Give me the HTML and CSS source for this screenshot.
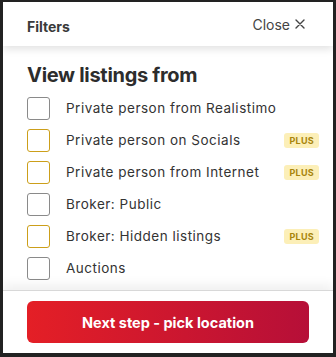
FILE: index.html
```html
<!DOCTYPE html>
<html lang="en">
<head>
    <meta charset="UTF-8">
    <meta name="viewport" content="width=device-width, initial-scale=1.0">
    <title>Filters</title>
    <link rel="stylesheet" href="styles.css">
</head>
<body>
    <div class="modal">
        <div class="modal-header">
            <div class="modal-title">Filters</div>
            <div class="close-btn">Close
                <svg class="close-x" width="10" height="10" viewBox="0 0 10 10">
                    <path d="M1 1 L9 9 M9 1 L1 9" stroke="#444" stroke-width="1.4" fill="none" stroke-linecap="round"/>
                </svg>
            </div>
        </div>

        <div class="modal-body">
            <h2>View listings from</h2>
            <label class="option">
                <span class="check"></span>
                <span class="option-label">Private person from Realistimo</span>
            </label>
            <label class="option">
                <span class="check check-plus"></span>
                <span class="option-label">Private person on Socials</span>
                <span class="badge">PLUS</span>
            </label>
            <label class="option">
                <span class="check check-plus"></span>
                <span class="option-label">Private person from Internet</span>
                <span class="badge">PLUS</span>
            </label>
            <label class="option">
                <span class="check"></span>
                <span class="option-label">Broker: Public</span>
            </label>
            <label class="option">
                <span class="check check-plus"></span>
                <span class="option-label">Broker: Hidden listings</span>
                <span class="badge">PLUS</span>
            </label>
            <label class="option">
                <span class="check"></span>
                <span class="option-label">Auctions</span>
            </label>
        </div>

        <div class="modal-footer">
            <button class="next-btn">Next step - pick location</button>
        </div>
    </div>
</body>
</html>
```

FILE: styles.css
```css
html, body {
    margin: 0;
    padding: 0;
    height: 100%;
}

body {
    background: #222222;
    font-family: 'Inter', 'Open Sans', sans-serif;
    color: #333;
    padding: 2px 3px 4px 3px;
    box-sizing: border-box;
}

.modal {
    background: #ffffff;
    height: 100%;
    display: flex;
    flex-direction: column;
    overflow: hidden;
}

.modal-header {
    height: 44px;
    flex-shrink: 0;
    display: flex;
    justify-content: space-between;
    align-items: center;
    padding: 0 28px 0 24px;
    box-shadow: 0 3px 8px rgba(0, 0, 0, 0.12);
    position: relative;
    z-index: 1;
}

.modal-title {
    font-size: 14px;
    font-weight: 700;
    color: #3a3a3a;
    padding-top: 4px;
}

.close-btn {
    font-size: 14px;
    color: #444;
    display: flex;
    align-items: center;
    gap: 5px;
}

.modal-body {
    flex: 1;
    padding: 17px 14px 0 24px;
    overflow: hidden;
    position: relative;
}

h2 {
    margin: 0 0 5px 0;
    font-size: 20px;
    font-weight: 700;
    color: #2d2d2d;
    letter-spacing: -0.3px;
}

.option {
    display: flex;
    align-items: center;
    height: 32px;
}

.check {
    width: 21px;
    height: 21px;
    border: 1.5px solid #8a8a8a;
    border-radius: 3px;
    flex-shrink: 0;
}

.check-plus {
    border-color: #cc9f1a;
}

.option-label {
    margin-left: 16px;
    font-size: 13.5px;
    letter-spacing: 0.5px;
    color: #333;
    flex: 1;
}

.badge {
    background: #fcefb8;
    color: #a8850c;
    font-size: 9px;
    font-weight: 700;
    padding: 2px 5px;
    border-radius: 3px;
    letter-spacing: 0.3px;
}

.modal-footer {
    flex-shrink: 0;
    height: 62px;
    border-top: 1px solid #d8d8d8;
    box-shadow: 0 -6px 10px rgba(0, 0, 0, 0.06);
    display: flex;
    align-items: center;
    padding: 0 24px;
    position: relative;
}

.next-btn {
    width: 100%;
    height: 42px;
    border: none;
    border-radius: 6px;
    background: linear-gradient(90deg, #e41f26, #b60f38);
    color: #ffffff;
    font-family: 'Inter', 'Open Sans', sans-serif;
    font-size: 14.5px;
    font-weight: 700;
}
```
